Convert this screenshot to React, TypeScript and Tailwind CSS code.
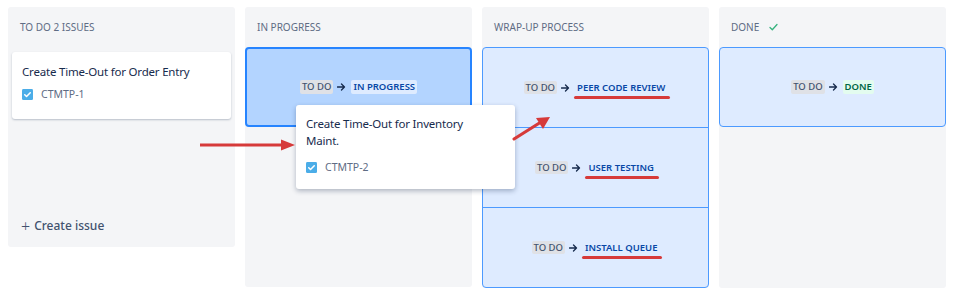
import React from "react";

const font = { fontFamily: '"Noto Sans", "Open Sans", sans-serif' };

function TaskIcon() {
  return (
    <svg width="11" height="11" viewBox="0 0 16 16" className="shrink-0">
      <rect x="0" y="0" width="16" height="16" rx="2" fill="#4bade8" />
      <path d="M4 8.3l2.6 2.6L12 5.4" stroke="#fff" strokeWidth="2.2" fill="none" strokeLinecap="round" strokeLinejoin="round" />
    </svg>
  );
}

function Transition({ to, toClass, underline }: { to: string; toClass: string; underline?: boolean }) {
  return (
    <div className="flex items-center gap-[4px] text-[9.5px] font-medium leading-none">
      <span className="bg-[#dfe1e6] text-[#42526e] px-[2px] py-[2px] rounded-[2px]">TO DO</span>
      <svg width="9" height="8" viewBox="0 0 9 8" className="shrink-0">
        <path d="M0.5 4h7M4.5 1l3 3-3 3" stroke="#172b4d" strokeWidth="1.3" fill="none" strokeLinecap="round" strokeLinejoin="round" />
      </svg>
      <span className={"relative ml-[1px] px-[2px] py-[2px] rounded-[2px] font-semibold " + toClass}>
        {to}
        {underline && (
          <span className="absolute left-[-1px] right-[-3px] top-full mt-[2px] h-[3px] rounded-full bg-[#d63a3a]" />
        )}
      </span>
    </div>
  );
}

export default function App() {
  return (
    <div className="relative w-[957px] h-[296px] bg-white overflow-hidden" style={font}>
      <div className="flex items-start gap-[10px] pl-[8px] pt-[7px]">
        {/* Column 1 */}
        <div className="w-[227px] h-[240px] bg-[#f4f5f7] rounded-[3px] flex flex-col">
          <div className="h-[40px] flex items-center px-[12px] text-[10px] text-[#5e6c84]">TO DO 2 ISSUES</div>
          <div className="px-[4px] pt-[5px]">
            <div className="bg-white rounded-[3px] shadow-[0_1px_2px_rgba(9,30,66,0.25)] h-[67px] px-[10px] pt-[12px]">
              <div className="text-[11.5px] tracking-[-0.2px] text-[#172b4d] leading-[16px]">Create Time-Out for Order Entry</div>
              <div className="flex items-center gap-[8px] mt-[7px]">
                <TaskIcon />
                <span className="text-[10.5px] text-[#5e6c84]">CTMTP-1</span>
              </div>
            </div>
          </div>
          <div className="mt-auto mb-[12px] px-[13px] flex items-center gap-[4px] text-[12px] text-[#42526e] font-medium">
            <span className="text-[16px] leading-none font-light">+</span>
            <span>Create issue</span>
          </div>
        </div>

        {/* Column 2 */}
        <div className="w-[227px] h-[280px] bg-[#f4f5f7] rounded-[3px] flex flex-col">
          <div className="h-[40px] flex items-center px-[12px] text-[10px] text-[#5e6c84]">IN PROGRESS</div>
          <div className="h-[80px] bg-[#b3d4ff] border-2 border-[#2684ff] rounded-[4px] flex items-center justify-center">
            <Transition to="IN PROGRESS" toClass="bg-[#deebff] text-[#0747a6]" />
          </div>
        </div>

        {/* Column 3 */}
        <div className="w-[227px] h-[281px] bg-[#f4f5f7] rounded-[3px] flex flex-col">
          <div className="h-[40px] flex items-center px-[12px] text-[10px] text-[#5e6c84]">WRAP-UP PROCESS</div>
          <div className="flex-1 border-[1.5px] border-[#4c9aff] rounded-[4px] bg-[#deebff] flex flex-col overflow-hidden">
            <div className="h-[80px] flex items-center justify-center border-b-[1.5px] border-[#4c9aff]">
              <Transition to="PEER CODE REVIEW" toClass="bg-[#deebff] text-[#0747a6]" underline />
            </div>
            <div className="h-[80px] flex items-center justify-center border-b-[1.5px] border-[#4c9aff]">
              <Transition to="USER TESTING" toClass="bg-[#deebff] text-[#0747a6]" underline />
            </div>
            <div className="flex-1 flex items-center justify-center">
              <Transition to="INSTALL QUEUE" toClass="bg-[#deebff] text-[#0747a6]" underline />
            </div>
          </div>
        </div>

        {/* Column 4 */}
        <div className="w-[227px] h-[281px] bg-[#f4f5f7] rounded-[3px] flex flex-col">
          <div className="h-[40px] flex items-center gap-[10px] px-[12px] text-[10px] text-[#5e6c84]">
            <span>DONE</span>
            <svg width="9" height="8" viewBox="0 0 9 8">
              <path d="M1 4.5l2.3 2.2L8 1.5" stroke="#36b37e" strokeWidth="1.3" fill="none" strokeLinecap="round" strokeLinejoin="round" />
            </svg>
          </div>
          <div className="h-[80px] bg-[#deebff] border-[1.5px] border-[#4c9aff] rounded-[4px] flex items-center justify-center">
            <Transition to="DONE" toClass="bg-[#e3fcef] text-[#006644]" />
          </div>
        </div>
      </div>

      {/* Dragged card */}
      <div className="absolute left-[296px] top-[105px] w-[219px] h-[84px] bg-white rounded-[3px] shadow-[0_2px_5px_rgba(9,30,66,0.3)] px-[10px] pt-[10px]">
        <div className="text-[11.5px] tracking-[-0.2px] text-[#172b4d] leading-[17px] w-[180px]">Create Time-Out for Inventory Maint.</div>
        <div className="flex items-center gap-[8px] mt-[11px]">
          <TaskIcon />
          <span className="text-[10.5px] text-[#5e6c84]">CTMTP-2</span>
        </div>
      </div>

      {/* Annotation arrows */}
      <svg className="absolute left-0 top-0 pointer-events-none" width="957" height="296">
        <line x1="200" y1="145" x2="284" y2="145" stroke="#d63a3a" strokeWidth="3.2" />
        <polygon points="295,145 281,139.5 281,150.5" fill="#d63a3a" />
        <line x1="514" y1="139" x2="541" y2="122" stroke="#d63a3a" strokeWidth="3.2" strokeLinecap="round" />
        <polygon points="550,117 536,118 543,129" fill="#d63a3a" />
      </svg>
    </div>
  );
}
